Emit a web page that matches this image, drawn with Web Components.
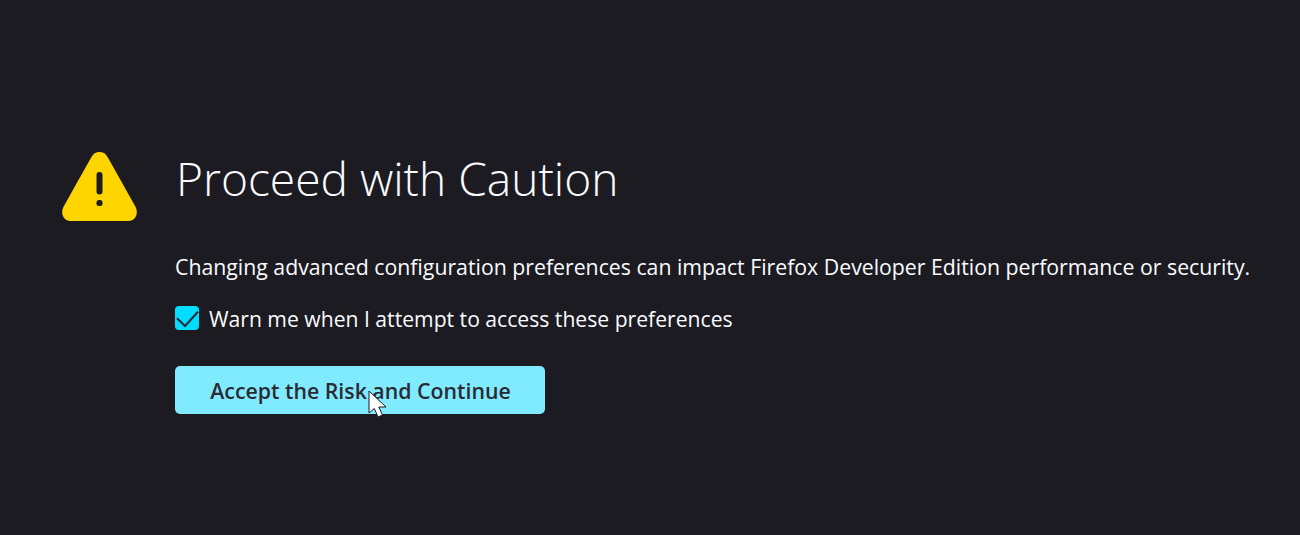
<!DOCTYPE html>
<html lang="en">
<head>
<meta charset="utf-8">
<title>Proceed with Caution</title>
<style>
  html, body { margin: 0; height: 100%; background: #1c1b22; }
  body { font-family: "Open Sans", "Noto Sans", sans-serif; color: #fbfbfe; overflow: hidden; }
</style>
</head>
<body>
<warning-page>
  <warning-icon slot="icon"></warning-icon>
  <span slot="title">Proceed with Caution</span>
  <span slot="message">Changing advanced configuration preferences can impact Firefox Developer Edition performance or security.</span>
  <warn-checkbox slot="option" checked>Warn me when I attempt to access these preferences</warn-checkbox>
  <accept-button slot="action">Accept the Risk and Continue</accept-button>
</warning-page>
<mouse-pointer></mouse-pointer>

<script>
class WarningPage extends HTMLElement {
    constructor() {
        super();
        this.attachShadow({ mode: 'open' });
        this.shadowRoot.innerHTML = `
            <style>
                :host {
                    display: flex;
                    padding: 152px 0 0 62px;
                    gap: 38px;
                }
                .body { display: flex; flex-direction: column; align-items: flex-start; margin-top: -8px; }
                h1 {
                    margin: 0;
                    padding-left: 1px;
                    font-size: 46.1px;
                    line-height: 70px;
                    font-weight: 300;
                    white-space: nowrap;
                }
                p {
                    margin: 38px 0 0;
                    font-size: 21.27px;
                    line-height: 30px;
                    white-space: nowrap;
                }
                .option { margin-top: 21px; }
                .action { margin-top: 33px; }
            </style>
            <slot name="icon"></slot>
            <div class="body">
                <h1><slot name="title"></slot></h1>
                <p><slot name="message"></slot></p>
                <div class="option"><slot name="option"></slot></div>
                <div class="action"><slot name="action"></slot></div>
            </div>
        `;
    }
}

class WarningIcon extends HTMLElement {
    constructor() {
        super();
        this.attachShadow({ mode: 'open' });
        this.shadowRoot.innerHTML = `
            <style>
                :host { display: block; width: 75px; height: 69px; }
                svg { display: block; }
            </style>
            <svg width="75" height="69" viewBox="0 0 75 69">
                <path fill="#ffd500" d="M29.300 5.200C31.200 1.900 34 0 37.500 0s6.300 1.900 8.200 5.200l27.800 49.500C76.800 61.200 73.600 69 66.500 69H8.500C1.400 69-1.800 61.200 1.500 54.700z"/>
                <rect x="34.500" y="20" width="6" height="22.500" rx="3" fill="#1c1b22"/>
                <rect x="34.500" y="48" width="6" height="6" rx="2.500" fill="#1c1b22"/>
            </svg>
        `;
    }
}

class WarnCheckbox extends HTMLElement {
    constructor() {
        super();
        this.attachShadow({ mode: 'open' });
        this.shadowRoot.innerHTML = `
            <style>
                :host { display: flex; align-items: center; gap: 10px; font-size: 21.15px; line-height: 30px; white-space: nowrap; }
                .box {
                    width: 24px; height: 24px;
                    border-radius: 4px;
                    background: #00ddff;
                    display: flex;
                    flex: none;
                }
                .label { padding-top: 2px; line-height: 28px; }
            </style>
            <span class="box">
                <svg width="24" height="24" viewBox="0 0 24 24">
                    <path d="M2 12.300l8 7.700L23 5.800" fill="none" stroke="#2b2a33" stroke-width="2"/>
                </svg>
            </span>
            <span class="label"><slot></slot></span>
        `;
    }
}

class AcceptButton extends HTMLElement {
    constructor() {
        super();
        this.attachShadow({ mode: 'open' });
        this.shadowRoot.innerHTML = `
            <style>
                :host {
                    display: flex;
                    align-items: center;
                    justify-content: center;
                    width: 370px;
                    height: 48px;
                    border-radius: 5px;
                    background: #80ebff;
                    color: #2b2a33;
                    font-size: 21.3px;
                    font-weight: 600;
                    white-space: nowrap;
                    padding-left: 1px;
                    box-sizing: border-box;
                }
            </style>
            <slot></slot>
        `;
    }
}

class MousePointer extends HTMLElement {
    constructor() {
        super();
        this.attachShadow({ mode: 'open' });
        this.shadowRoot.innerHTML = `
            <style>
                :host { position: absolute; left: 368px; top: 390px; width: 20px; height: 28px; }
                svg { display: block; }
            </style>
            <svg width="20" height="28" viewBox="0 0 20 28">
                <path d="M1 1v22l5.300-4.500 3.700 8.500 4.500-2-3.700-8H18z" fill="#fff" stroke="#1c1b22" stroke-width="1"/>
            </svg>
        `;
    }
}

customElements.define('warning-page', WarningPage);
customElements.define('warning-icon', WarningIcon);
customElements.define('warn-checkbox', WarnCheckbox);
customElements.define('accept-button', AcceptButton);
customElements.define('mouse-pointer', MousePointer);
</script>
</body>
</html>
